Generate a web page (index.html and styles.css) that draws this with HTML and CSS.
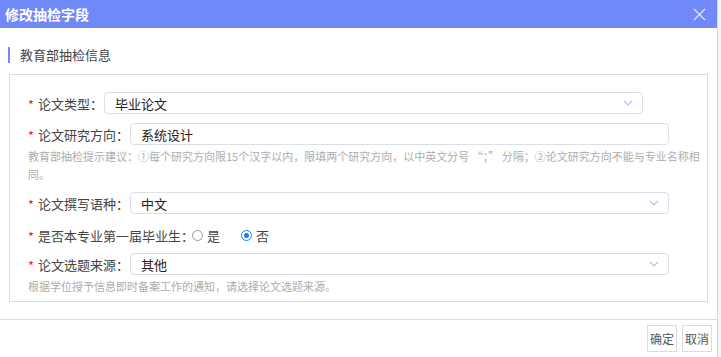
FILE: index.html
```html
<!DOCTYPE html>
<html lang="zh-CN">
<head>
    <meta charset="UTF-8">
    <title>修改抽检字段</title>
    <link rel="stylesheet" href="styles.css">
</head>
<body>
    <div class="dialog">
        <div class="header">
            <span class="title">修改抽检字段</span>
            <svg class="close" width="13" height="13" viewBox="0 0 13 13">
                <path d="M1 1 L12 12 M12 1 L1 12" stroke="#ffffff" stroke-width="1.4" fill="none"/>
            </svg>
        </div>

        <div class="section-title">教育部抽检信息</div>

        <div class="box">
            <div class="row">
                <span class="req">*</span>
                <span class="label">论文类型：</span>
                <div class="field">
                    <span>毕业论文</span>
                    <svg class="arrow" width="10" height="6" viewBox="0 0 10 6"><polyline points="1,1 5,5 9,1" stroke="#b7c3ef" stroke-width="1.2" fill="none"/></svg>
                </div>
            </div>

            <div class="row row-gap">
                <span class="req">*</span>
                <span class="label">论文研究方向：</span>
                <div class="field">
                    <span>系统设计</span>
                </div>
            </div>
            <div class="hint">教育部抽检提示建议：①每个研究方向限15个汉字以内，限填两个研究方向，以中英文分号 “；” 分隔；②论文研究方向不能与专业名称相同。</div>

            <div class="row row-gap">
                <span class="req">*</span>
                <span class="label">论文撰写语种：</span>
                <div class="field">
                    <span>中文</span>
                    <svg class="arrow" width="10" height="6" viewBox="0 0 10 6"><polyline points="1,1 5,5 9,1" stroke="#b7c3ef" stroke-width="1.2" fill="none"/></svg>
                </div>
            </div>

            <div class="row radio-row">
                <span class="req">*</span>
                <span class="label">是否本专业第一届毕业生：</span>
                <label class="radio"><span class="dot"></span>是</label>
                <label class="radio checked"><span class="dot"></span>否</label>
            </div>

            <div class="row row-last">
                <span class="req">*</span>
                <span class="label">论文选题来源：</span>
                <div class="field">
                    <span>其他</span>
                    <svg class="arrow" width="10" height="6" viewBox="0 0 10 6"><polyline points="1,1 5,5 9,1" stroke="#b7c3ef" stroke-width="1.2" fill="none"/></svg>
                </div>
            </div>
            <div class="hint">根据学位授予信息即时备案工作的通知，请选择论文选题来源。</div>
        </div>

        <div class="footer">
            <button class="btn">确定</button>
            <button class="btn">取消</button>
        </div>
    </div>
</body>
</html>
```

FILE: styles.css
```css
body {
    margin: 0;
    background-color: #f4f4f4;
    font-family: "Noto Sans CJK SC", "Noto Sans", sans-serif;
    color: #444;
}

.dialog {
    width: 717px;
    height: 357px;
    background-color: #fff;
    border-right: 1px solid #d9d9d9;
}

.header {
    height: 28px;
    background-color: #7089f9;
    display: flex;
    align-items: center;
    justify-content: space-between;
    padding: 0 11px 0 5px;
}

.title {
    color: #fff;
    font-size: 14px;
    font-weight: bold;
}

.close {
    opacity: 0.75;
}

.section-title {
    margin: 19px 0 0 8px;
    height: 16px;
    line-height: 16px;
    border-left: 2px solid #7089f9;
    padding-left: 10px;
    font-size: 13px;
    color: #444;
}

.box {
    margin: 11px 9px 0 9px;
    border: 1px solid #dcdcdc;
    padding: 17px 10px 6px 18px;
}

.row {
    display: flex;
    align-items: center;
    height: 22px;
}

.row-gap {
    margin-top: 9px;
}

.radio-row {
    margin-top: 10px;
}

.radio-row .label {
    margin-right: -2px;
}

.row-last {
    margin-top: 7px;
}

.req {
    color: #f5222d;
    font-size: 13px;
    width: 10px;
    line-height: 22px;
    padding-top: 3px;
}

.label {
    font-size: 13px;
    margin-right: 1px;
}

.field {
    width: 539px;
    height: 22px;
    box-sizing: border-box;
    border: 1px solid #dcdfe6;
    border-radius: 4px;
    padding: 0 9px 0 10px;
    display: flex;
    align-items: center;
    justify-content: space-between;
    font-size: 13px;
    color: #222;
}

.hint {
    font-size: 11px;
    line-height: 18px;
    color: #adadad;
    margin-top: 2px;
    width: 672px;
}

.radio {
    display: flex;
    align-items: center;
    font-size: 13px;
    margin-right: 21px;
}

.dot {
    width: 11px;
    height: 11px;
    box-sizing: border-box;
    border: 1px solid #9a9a9a;
    border-radius: 50%;
    margin-right: 4px;
    display: flex;
    align-items: center;
    justify-content: center;
}

.radio.checked .dot {
    border-color: #1a7cf5;
}

.radio.checked .dot::after {
    content: '';
    width: 5px;
    height: 5px;
    border-radius: 50%;
    background-color: #1a7cf5;
}

.footer {
    margin-top: 17px;
    border-top: 1px solid #dcdcdc;
    padding: 5px 5px 0 0;
    display: flex;
    justify-content: flex-end;
    gap: 5px;
}

.btn {
    width: 30px;
    height: 27px;
    padding: 0;
    border: 1px solid #dcdcdc;
    background-color: #fff;
    font-family: "Noto Sans CJK SC", sans-serif;
    font-size: 12px;
    color: #555;
}
```
